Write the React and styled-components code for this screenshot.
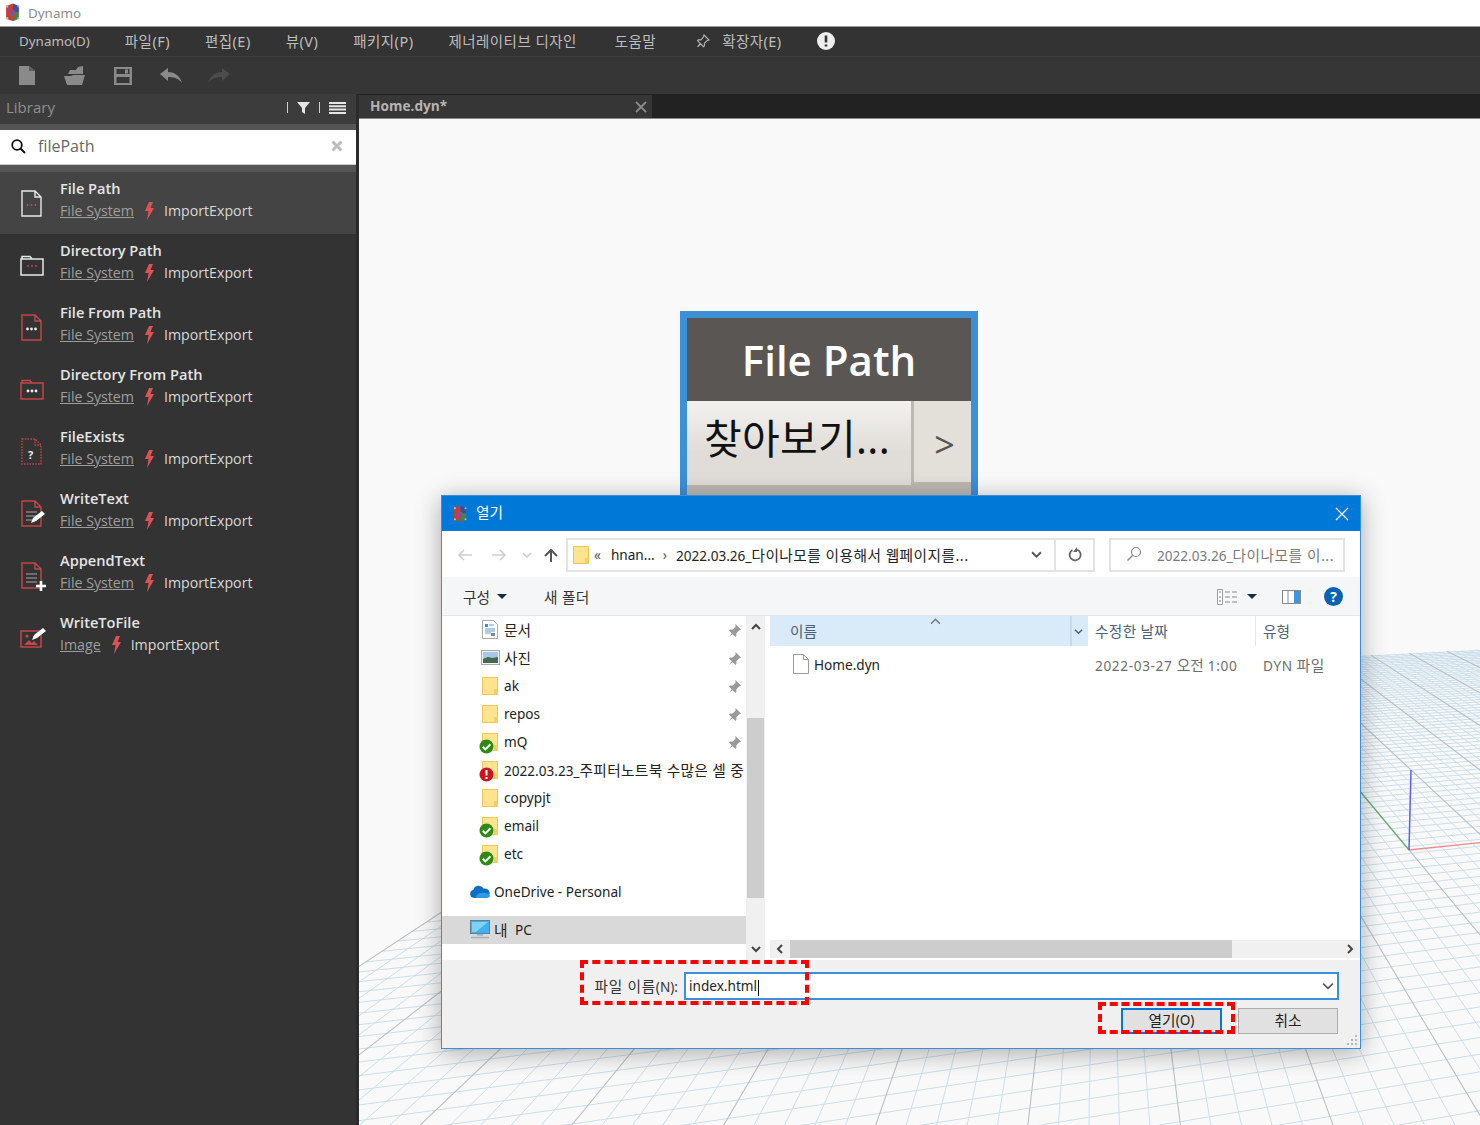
import React from "react";
import styled, { createGlobalStyle } from "styled-components";

const KR = `"Noto Sans", "Noto Sans CJK KR", sans-serif`;
const OPEN = `"Open Sans", "Noto Sans CJK KR", sans-serif`;

const Global = createGlobalStyle`
  html, body { margin: 0; padding: 0; background: #fff; }
  * { box-sizing: border-box; }
`;

const Page = styled.div`
  width: 1480px; height: 1125px; overflow: hidden; display: flex; flex-direction: column;
  font-family: ${KR}; background: #333;
`;
const TitleBar = styled.div`
  height: 27px; background: #fff; border-bottom: 1px solid #9a9a9a; display: flex; align-items: center;
  padding: 0 0 1px 5px; gap: 8px; color: #8c8c8c; font-size: 13.4px; flex: none;
`;
const MenuBar = styled.div`
  height: 30px; background: #333; border-bottom: 1px solid #3d3d3d; display: flex; align-items: center;
  padding: 0 0 2px 19px; gap: 35px; color: #bdbdbd; font-size: 13.4px; flex: none;
`;
const MenuItem = styled.span`
  display: inline-flex; align-items: center; gap: 12px; white-space: nowrap;
  margin-left: ${p => p.$ml || 0}px;
  ${p => p.$ko && "font-size: 14.5px; letter-spacing: .45px;"}
`;
const Toolbar = styled.div`
  height: 37px; background: #363636; display: flex; align-items: center; padding-left: 3px; flex: none;
`;
const ToolButton = styled.div`
  width: 48px; display: flex; justify-content: center; align-items: center;
`;
const Main = styled.div`
  flex: 1; display: flex; min-height: 0;
`;
const Library = styled.aside`
  width: 359px; flex: none; background: #333; border-right: 3px solid #2b2b2b; display: flex; flex-direction: column;
`;
const LibHeader = styled.div`
  height: 30px; background: #3c3c3c; display: flex; align-items: center; padding: 0 10px 3px 6px;
  color: #8f8f8f; font-family: ${OPEN}; font-size: 15px; flex: none;
`;
const LibTitle = styled.span`flex: 1; padding-bottom: 1px;`;
const LibTools = styled.div`
  display: flex; align-items: center; gap: 9px; color: #cfcfcf;
`;
const Sep = styled.i`
  width: 1px; height: 11px; background: #cfcfcf; display: block;
`;
const SearchWrap = styled.div`
  background: #555; padding: 6px 0 7px; flex: none;
`;
const SearchBox = styled.div`
  height: 35px; background: #fff; display: flex; align-items: center; padding: 0 13px 2px 11px; gap: 12px;
  border-bottom: 1px solid #ccc;
`;
const SearchText = styled.span`
  flex: 1; font-family: ${OPEN}; font-size: 16px; color: #666;
`;
const Row = styled.div`
  height: 62px; display: flex; align-items: center; flex: none; background: ${p => (p.$active ? "#444" : "transparent")};
`;
const RowIcon = styled.div`
  width: 60px; flex: none; display: flex; justify-content: center; padding: 3px 0 0 6px;
`;
const RowText = styled.div`
  display: flex; flex-direction: column; padding-bottom: 6px; font-family: ${OPEN};
`;
const RowName = styled.div`
  line-height: 20px; margin-bottom: 2px; font-size: 14.6px; font-weight: 600; color: #e4e4e4;
`;
const RowSub = styled.div`
  line-height: 22px; font-size: 14.2px; color: #d8d8d8; display: flex; align-items: center;
`;
const RowLink = styled.span`
  color: #9e9e9e; text-decoration: underline;
`;
const BoltWrap = styled.span`
  display: inline-flex; margin: 0 10px 0 10px;
`;
const Workspace = styled.div`
  flex: 1; display: flex; flex-direction: column; min-width: 0;
`;
const TabRow = styled.div`
  height: 25px; display: flex; background: #222; border-bottom: 1px solid #8a8a8a; flex: none; padding-top: 1px;
`;
const Tab = styled.div`
  width: 293px; background: #363636; display: flex; align-items: center; justify-content: space-between;
  padding: 0 5px 2px 11px; font-family: ${OPEN}; font-size: 13.7px; font-weight: 700; color: #b5b5b5;
`;
const Canvas = styled.div`
  flex: 1; position: relative; background: #f9f9f9; overflow: hidden;
`;
const GridSvg = styled.svg`
  position: absolute; inset: 0;
`;
const Node = styled.div`
  position: absolute; left: 321px; top: 192px; width: 298px; height: 200px; border: 7px solid #3d8fd8;
  background: #bdb8b2; display: flex; flex-direction: column;
`;
const NodeTitle = styled.div`
  height: 83px; background: #5a5654; color: #fff; display: flex; align-items: center; justify-content: center;
  font-family: ${OPEN}; font-size: 42px; font-weight: 600; flex: none;
`;
const NodeBody = styled.div`
  display: flex; height: 81px; flex: none;
`;
const NodeBrowse = styled.div`
  width: 224px; height: 84px; background: linear-gradient(#f3f1ef, #e0ddd8 60%); color: #111; font-size: 41px;
  display: flex; align-items: center; padding: 0 0 15px 17px; font-family: ${KR}; white-space: nowrap; letter-spacing: .3px;
`;
const NodeArrow = styled.div`
  width: 57px; margin-left: 3px; background: #e3e0da; color: #555; font-size: 36px; display: flex; align-items: center;
  justify-content: center; font-family: ${OPEN}; padding: 6px 0 0 4px;
`;
const Dialog = styled.div`
  position: absolute; left: 82px; top: 376px; width: 920px; height: 554px; border: 1px solid #3a8fdc;
  background: #fff; display: flex; flex-direction: column; box-shadow: 0 4px 24px rgba(0,0,0,.32);
  font-size: 13.6px; color: #222;
`;
const Ko = styled.span`
  font-size: 14.7px; letter-spacing: ${p => p.$ls || 0}px;
`;
const DlgTitle = styled.div`
  height: 35px; background: #0078d7; color: #fff; display: flex; align-items: center; padding: 0 11px; gap: 9px; flex: none;
`;
const DlgTitleText = styled.span`flex: 1; padding-bottom: 4px;`;
const AddressRow = styled.div`
  height: 46px; display: flex; align-items: center; flex: none; padding: 1px 0 0 15px;
`;
const NavArrow = styled.div`
  width: ${p => p.$w}px; display: flex; justify-content: flex-start; flex: none;
`;
const AddressBar = styled.div`
  width: 529px; height: 34px; border: 2px solid #e3e3e3; display: flex; align-items: center; flex: none; margin-left: 6px; padding-left: 5px;
  white-space: nowrap;
`;
const AddrSeg = styled.span`
  margin-left: ${p => p.$ml}px; color: ${p => p.$c || "#222"}; padding-bottom: 1px;
`;
const AddrSpacer = styled.span`flex: 1;`;
const AddrChevron = styled.div`
  width: 36px; display: flex; justify-content: center;
`;
const RefreshBtn = styled.div`
  width: 39px; align-self: stretch; border-left: 2px solid #e3e3e3; display: flex; align-items: center; justify-content: center;
`;
const SearchField = styled.div`
  width: 236px; height: 34px; border: 2px solid #e3e3e3; margin-left: 14px; display: flex; align-items: center; gap: 15px; flex: none;
  padding: 0 0 1px 15px; color: #7a7a7a; white-space: nowrap; overflow: hidden;
`;
const DlgToolbar = styled.div`
  height: 39px; background: #f5f6f7; border-bottom: 1px solid #e6e6e6; display: flex; align-items: center; flex: none; padding: 1px 17px 0 21px;
  color: #333;
`;
const ToolLabel = styled.span`
  display: inline-flex; align-items: center; gap: ${p => p.$gap || 7}px; margin-right: ${p => p.$mr || 0}px;
`;
const Spacer = styled.span`flex: 1;`;
const Caret = styled.i`
  width: 0; height: 0; border-left: 5px solid transparent; border-right: 5px solid transparent; border-top: 5px solid #1a2a44; display: inline-block;
`;
const DlgContent = styled.div`
  height: 344px; display: flex; flex: none;
`;
const NavPane = styled.div`
  width: 304px; flex: none; overflow: hidden; display: flex; flex-direction: column;
`;
const NavRow = styled.div`
  height: 28px; display: flex; align-items: center; gap: 4px; flex: none; white-space: nowrap; position: relative; padding-bottom: 1px;
  padding-left: ${p => (p.$top ? 28 : 38)}px; margin-top: ${p => p.$mt || 0}px; background: ${p => (p.$sel ? "#d9d9d9" : "transparent")};
`;
const NavIconBox = styled.span`
  width: 20px; height: 20px; position: relative; display: inline-flex; align-items: center; justify-content: center; flex: none;
`;
const PinBox = styled.span`
  position: absolute; left: 286px; top: 8px; display: flex;
`;
const VScroll = styled.div`
  width: 19px; flex: none; background: #f0f0f0; position: relative; display: flex; flex-direction: column; align-items: center; justify-content: space-between; padding: 6px 0;
`;
const VThumb = styled.div`
  position: absolute; left: 1px; right: 1px; top: 102px; height: 180px; background: #cdcdcd;
`;
const ListPane = styled.div`
  margin-left: 5px; flex: 1; display: flex; flex-direction: column; position: relative;
`;
const ListHead = styled.div`
  height: 30px; display: flex; flex: none; color: #4c607a;
`;
const HeadName = styled.div`
  width: 318px; background: #d9ebf9; display: flex; align-items: center; padding: 0 0 2px 20px; position: relative;
`;
const SortMark = styled.span`
  position: absolute; left: 160px; top: 0; display: flex;
`;
const HeadSplit = styled.span`
  position: absolute; left: 300px; top: 0; bottom: 0; width: 18px; border-left: 2px solid #c4d9ea; display: flex; align-items: center; justify-content: center; padding-right: 3px;
`;
const HeadCol = styled.div`
  width: ${p => p.$w}px; display: flex; align-items: center; padding: 0 0 2px ${p => p.$pl}px; border-right: ${p => (p.$line ? "1px solid #e5e5e5" : "none")};
`;
const FileRow = styled.div`
  height: 38px; display: flex; align-items: center; color: #222; flex: none; padding-bottom: 2px;
`;
const FileName = styled.div`
  width: 325px; display: flex; align-items: center; gap: 5px; padding-left: 23px;
`;
const FileCell = styled.div`
  width: ${p => p.$w}px; color: #6d6d6d; white-space: nowrap; letter-spacing: ${p => p.$ls || 0}px;
`;
const ListSpacer = styled.div`flex: 1;`;
const HScroll = styled.div`
  height: 18px; margin-bottom: 2px; background: #f0f0f0; display: flex; align-items: center; flex: none;
`;
const HArrow = styled.div`
  width: 20px; display: flex; justify-content: center; flex: none;
`;
const HThumb = styled.div`
  width: 442px; height: 18px; background: #cdcdcd; flex: none;
`;
const DlgBottom = styled.div`
  flex: 1; background: #f0f0f0; position: relative; display: flex; flex-direction: column; padding: 12px 21px 0 0;
`;
const FileLine = styled.div`
  display: flex; align-items: center; justify-content: flex-end; gap: 6px; height: 28px;
`;
const FileLabel = styled.span`
  color: #333; white-space: nowrap; padding-bottom: 2px;
`;
const FileInput = styled.div`
  width: 655px; height: 28px; background: #fff; border: 2px solid #3a8fdc; display: flex; align-items: center; padding: 0 3px; justify-content: space-between;
  color: #222;
`;
const Cursor = styled.i`
  display: inline-block; width: 1px; height: 16px; background: #111; vertical-align: middle; margin-left: 1px;
`;
const BtnLine = styled.div`
  display: flex; justify-content: flex-end; gap: 16px; margin: 8px 1px 0 0;
`;
const DlgBtn = styled.div`
  width: ${p => p.$w}px; height: 26px; background: #e1e1e1; border: ${p => (p.$primary ? "2px solid #0078d7" : "1px solid #adadad")};
  display: flex; align-items: center; justify-content: center; color: #222; padding-bottom: 4px;
`;
const Callout = styled.div`
  position: absolute; left: ${p => p.$l}px; top: ${p => p.$t}px; width: ${p => p.$w}px; height: ${p => p.$h}px;
  border: 4px dashed #f00; pointer-events: none;
`;
const Grip = styled.svg`
  position: absolute; right: 2px; bottom: 2px;
`;

const Logo = ({ w = 15 }) => (
  <svg width={w} height={w * 1.25} viewBox="0 0 15 19">
    <path d="M1 3 8 .5V18.500L1 16z" fill="#c4403a" />
    <path d="M8 .5 14 3v6H8z" fill="#3b4f9e" />
    <path d="M8 9h6v7l-6 2.500z" fill="#4f7f45" />
    <path d="M4.500 6.500 10.500 7.500 9 13.500 4 12.500z" fill="#8a4f8f" />
    <circle cx="2" cy="3.500" r="1.200" fill="#e9a0a0" /><circle cx="13.500" cy="3.500" r="1.100" fill="#9fb4e0" /><circle cx="2" cy="15.500" r="1.200" fill="#e9b0a0" /><circle cx="13.500" cy="15.500" r="1.100" fill="#a0c8a0" />
  </svg>
);

const RED = "#c4474a";
const Dots = ({ x, y, c, r = 1.1 }) => (
  <g fill={c}><circle cx={x} cy={y} r={r} /><circle cx={x + 4} cy={y} r={r} /><circle cx={x + 8} cy={y} r={r} /></g>
);
const FileShape = ({ c, dash }) => (
  <path d="M2 2h13l6 6v19H2zM15 2v6h6" fill="none" stroke={c} strokeWidth="1.4" strokeDasharray={dash ? "1.5 1.3" : undefined} />
);
const FolderShape = ({ c }) => (
  <path d="M1 8h22v16H1zM2 8V5.5h8l2 2.5" fill="none" stroke={c} strokeWidth="1.5" />
);
const Lines = () => (
  <g stroke="#a8a8a8" strokeWidth="1.2"><path d="M6 13h11M6 17h11M6 21h11" /></g>
);
const Pen = ({ x = 0, y = 0 }) => (
  <path transform={`translate(${x} ${y})`} d="M7 16l2-5 9-7 3 3-9 7z" fill="#fff" />
);
const RowGlyph = ({ kind }) => {
  const m = {
    filePath: <><FileShape c="#e8e8e8" /><Dots x={7.5} y={16} c="#d8484a" r={.9} /></>,
    dirPath: <><FolderShape c="#e8e8e8" /><Dots x={8} y={15} c="#d8484a" r={.9} /></>,
    fileFrom: <><FileShape c={RED} /><Dots x={7.5} y={16} c="#eee" r={1.4} /></>,
    dirFrom: <><FolderShape c={RED} /><Dots x={8} y={16} c="#eee" r={1.4} /></>,
    exists: <><FileShape c={RED} dash /><text x="8" y="22" fontSize="11" fontWeight="700" fill="#eee" fontFamily="Open Sans">?</text></>,
    write: <><FileShape c={RED} /><Lines /><Pen x={4} y={8} /></>,
    append: <><FileShape c={RED} /><Lines /><path d="M21 20v10M16 25h10" stroke="#fff" strokeWidth="2.6" /></>,
    image: <><path d="M1 8h20v16H1z" fill="none" stroke={RED} strokeWidth="1.5" /><path d="M4 22l5-5 3 3 2-2 4 4z" fill={RED} /><circle cx="7" cy="13" r="1.6" fill={RED} /><Pen x={5} y={1} /></>,
  };
  return <svg width="27" height="32" viewBox="0 0 27 32" style={{ overflow: "visible" }}>{m[kind]}</svg>;
};
const Bolt = () => (
  <svg width="10" height="18" viewBox="0 0 10 18"><path d="M5 0h4L6.5 6H10L3 18l1.6-9H1z" fill="#de5253" /></svg>
);

const GRAY = "#8a8a8a";
const TbFile = () => <svg width="16" height="19" viewBox="0 0 16 19"><path d="M0 0h10l6 5v14H0z" fill={GRAY} /><path d="M10 0v5h6" fill="#5f5f5f" /></svg>;
const TbOpen = () => <svg width="22" height="19" viewBox="0 0 22 19"><path d="M4 8 6 4h6l2-3 5-1v8z" fill={GRAY} /><path d="M0 10h7l2-1h12l-3 10H3z" fill={GRAY} /></svg>;
const TbSave = () => <svg width="18" height="18" viewBox="0 0 18 18"><path d="M0 0h18v18H0zM2.500 2v5h13V2zM2.500 10v6h13v-6z" fill={GRAY} fillRule="evenodd" /><path d="M11 2.500h3v4h-3z" fill={GRAY} /></svg>;
const TbUndo = ({ c }) => <svg width="22" height="15" viewBox="0 0 22 15"><path d="M8 0v4c7 0 12 4 14 11-3-4-7-6-14-6v4L0 6z" fill={c} /></svg>;
const TbRedo = ({ c }) => <svg width="22" height="15" viewBox="0 0 22 15"><path d="M14 0v4C7 4 2 8 0 15c3-4 7-6 14-6v4l8-7z" fill={c} /></svg>;
const Pin = ({ c = "#8f8f8f", s = 13 }) => (
  <svg width={s} height={s} viewBox="0 0 14 14"><path d="M8 0l6 6-2 1-3 3 0 3-1 1-3-3-4 3 3-4-3-3 1-1h3l3-3z" fill={c} /></svg>
);
const PinOutline = () => (
  <svg width="14" height="14" viewBox="0 0 14 14"><path d="M8 1l5 5-2 .7-2.600 2.600 0 2.700-.9.7-2.700-2.700L1.500 12.800l2.800-3.300L1.600 6.800l.7-.9h2.700L7.300 3z" fill="none" stroke="#b5b5b5" strokeWidth="1.100" /></svg>
);
const Chevron = ({ dir = "down", c = "#555", s = 10, w = 1.6 }) => {
  const d = { down: "M1 3l4 4 4-4", up: "M1 7l4-4 4 4", left: "M7 1L3 5l4 4", right: "M3 1l4 4-4 4" }[dir];
  return <svg width={s} height={s} viewBox="0 0 10 10"><path d={d} fill="none" stroke={c} strokeWidth={w} /></svg>;
};
const Folder = () => (
  <svg width="16" height="18" viewBox="0 0 16 18"><path d="M.5.500h12l3 0v17H.500z" fill="#ffe48f" stroke="#eac559" /><path d="M12 12h3.500v5.500H12z" fill="#f4cf63" /></svg>
);
const Badge = ({ kind }) => (
  <svg width="15" height="15" viewBox="0 0 15 15" style={{ position: "absolute", left: -1, bottom: -2 }}>
    <circle cx="7.500" cy="7.500" r="7" fill={kind === "ok" ? "#2f8a12" : "#c8171d"} />
    {kind === "ok"
      ? <path d="M3.800 7.800l2.600 2.600 5-5.200" fill="none" stroke="#fff" strokeWidth="2" />
      : <path d="M7.500 3v5.500M7.500 10v2" stroke="#fff" strokeWidth="2" />}
  </svg>
);
const DocIcon = () => (
  <svg width="16" height="19" viewBox="0 0 16 19"><path d="M.5.500h11l4 4v14H.500z" fill="#fff" stroke="#a9a9a9" /><path d="M3 4h3v3H3z" fill="#3f8fd8" /><path d="M7 5h5M3 9h10M3 11h10M3 13h6" stroke="#5c9ad2" /><path d="M9 13h4v3H9z" fill="#7a8a9a" /></svg>
);
const PicIcon = () => (
  <svg width="19" height="15" viewBox="0 0 19 15"><rect x=".5" y=".5" width="18" height="14" fill="#f2f2f2" stroke="#a9a9a9" /><rect x="2" y="2" width="15" height="11" fill="#a6c6ea" /><path d="M2 9l5-2 4 1 6-1v6H2z" fill="#44694f" /></svg>
);
const Cloud = () => (
  <svg width="20" height="13" viewBox="0 0 20 13"><path d="M4 13a4 4 0 0 1-.7-7.900A5.500 5.500 0 0 1 13.500 3.600 4.800 4.800 0 0 1 16 13z" fill="#0b6fc4" /><path d="M6 13c0-3 2-5 5-5 2-1 9 0 9 3 0 1-2 2-4 2z" fill="#2b9be8" /></svg>
);
const Monitor = () => (
  <svg width="20" height="19" viewBox="0 0 20 19"><rect x=".5" y=".5" width="19" height="13" fill="#3fb0f2" stroke="#5f7f94" /><path d="M2 2h16L6 12H2z" fill="#7fd2fa" /><path d="M7 14h6v2H7z" fill="#a9bcc9" /><path d="M1 17.500h18" stroke="#9fb0bc" strokeWidth="1.400" /></svg>
);
const DocFile = () => (
  <svg width="16" height="20" viewBox="0 0 16 20"><path d="M.5.500h10l5 5v14H.500zM10.500.500v5h5" fill="#fff" stroke="#9a9a9a" /></svg>
);
const ArrowLine = ({ dir, c }) => (
  <svg width="16" height="14" viewBox="0 0 16 14">
    {dir === "left" && <path d="M15 7H2M7 2 2 7l5 5" fill="none" stroke={c} strokeWidth="1.600" />}
    {dir === "right" && <path d="M1 7h13M9 2l5 5-5 5" fill="none" stroke={c} strokeWidth="1.600" />}
    {dir === "up" && <path d="M8 14V2M2 8l6-6 6 6" fill="none" stroke={c} strokeWidth="2" />}
  </svg>
);

const VA = [5100, 470], VB = [1100, 480], O = [1409, 850];
const a = 0.0219, b = 0.087;
const project = (u, v) => {
  const w = u * a + v * b + 1;
  return [(u * a * VA[0] + v * b * VB[0] + O[0]) / w, (u * a * VA[1] + v * b * VB[1] + O[1]) / w];
};
const Uline = (v, u0, u1) => { const p = project(u0, v), q = project(u1, v); return `M${p[0].toFixed(1)} ${p[1].toFixed(1)}L${q[0].toFixed(1)} ${q[1].toFixed(1)}`; };
const Vline = (u, v0, v1) => { const p = project(u, v0), q = project(u, v1); return `M${p[0].toFixed(1)} ${p[1].toFixed(1)}L${q[0].toFixed(1)} ${q[1].toFixed(1)}`; };

const UMIN = -10, UMAX = 12, VMIN = -7.5, VMAX = 12;
const buildGrid = () => {
  let minor = "", major = "";
  for (let i = 0; i <= (UMAX - UMIN) * 5; i++) {
    const u = UMIN + i / 5;
    const d = Vline(u, VMIN, VMAX);
    if (i % 5 === 0) major += d; else minor += d;
  }
  for (let i = 0; i <= (VMAX - VMIN) * 5; i++) {
    const v = VMIN + i / 5;
    const d = Uline(v, UMIN, UMAX);
    if (Math.abs(v - Math.round(v)) < 0.01) major += d; else minor += d;
  }
  return { minor, major };
};
const Grid = () => {
  const { minor, major } = buildGrid();
  const g = project(0, 3), r = project(10, 0);
  return (
    <GridSvg width="1121" height="1006" viewBox="359 119 1121 1006">
      <path d={minor} stroke="#cbdfeb" strokeWidth="1" fill="none" />
      <path d={major} stroke="#b9c0c4" strokeWidth="1.100" fill="none" />
      <path d={`M${O[0]} ${O[1]}L${g[0]} ${g[1]}`} stroke="#6fae70" strokeWidth="1.300" />
      <path d={`M${O[0]} ${O[1]}L${r[0]} ${r[1]}`} stroke="#f28a8a" strokeWidth="1.300" />
      <path d="M1409 850L1411 770" stroke="#5f5fea" strokeWidth="1.500" />
    </GridSvg>
  );
};

const rows = [
  ["File Path", "File System", "filePath", true],
  ["Directory Path", "File System", "dirPath"],
  ["File From Path", "File System", "fileFrom"],
  ["Directory From Path", "File System", "dirFrom"],
  ["FileExists", "File System", "exists"],
  ["WriteText", "File System", "write"],
  ["AppendText", "File System", "append"],
  ["WriteToFile", "Image", "image"],
];
const nav = [
  [<Ko key="k">문서</Ko>, "doc", true, "a"], [<Ko key="k">사진</Ko>, "pic", true, "b"], ["ak", null, true, "c"], ["repos", null, true, "d"], ["mQ", "ok", true, "e"],
  [<>2022.03.23_<Ko $ls={.32}>주피터노트북 수많은 셀 중</Ko></>, "err", false, "f"], ["copypjt", null, false, "g"], ["email", "ok", false, "h"], ["etc", "ok", false, "i"],
];

export default function App() {
  return (
    <Page>
      <Global />
      <TitleBar><Logo /><span>Dynamo</span></TitleBar>
      <MenuBar>
        <MenuItem>Dynamo(D)</MenuItem>
        <MenuItem $ko>파일(F)</MenuItem>
        <MenuItem $ko>편집(E)</MenuItem>
        <MenuItem $ko>뷰(V)</MenuItem>
        <MenuItem $ko>패키지(P)</MenuItem>
        <MenuItem $ko>제너레이티브 디자인</MenuItem>
        <MenuItem $ko $ml={3}>도움말</MenuItem>
        <MenuItem $ko $ml={5}><PinOutline />확장자(E)</MenuItem>
        <svg width="18" height="18" viewBox="0 0 18 18"><circle cx="9" cy="9" r="9" fill="#eee" /><path d="M9 3.500v7M9 12.500v2" stroke="#333" strokeWidth="2.600" /></svg>
      </MenuBar>
      <Toolbar>
        <ToolButton><TbFile /></ToolButton>
        <ToolButton><TbOpen /></ToolButton>
        <ToolButton><TbSave /></ToolButton>
        <ToolButton><TbUndo c="#8a8a8a" /></ToolButton>
        <ToolButton><TbRedo c="#4c4c4c" /></ToolButton>
      </Toolbar>
      <Main>
        <Library>
          <LibHeader>
            <LibTitle>Library</LibTitle>
            <LibTools>
              <Sep />
              <svg width="13" height="12" viewBox="0 0 13 12"><path d="M0 0h13L8 6v6L5 10V6z" fill="#e6e6e6" /></svg>
              <Sep />
              <svg width="17" height="12" viewBox="0 0 17 12"><path d="M0 1h17M0 4.300h17M0 7.600h17M0 11h17" stroke="#e6e6e6" strokeWidth="2" /></svg>
            </LibTools>
          </LibHeader>
          <SearchWrap>
            <SearchBox>
              <svg width="15" height="15" viewBox="0 0 15 15"><circle cx="6" cy="6" r="4.800" fill="none" stroke="#111" strokeWidth="1.800" /><path d="M9.500 9.500 14 14" stroke="#111" strokeWidth="2" /></svg>
              <SearchText>filePath</SearchText>
              <svg width="12" height="12" viewBox="0 0 12 12"><path d="M1.500 1.500l9 9M10.500 1.500l-9 9" stroke="#bdbdbd" strokeWidth="3" /></svg>
            </SearchBox>
          </SearchWrap>
          {rows.map(([name, link, kind, active]) => (
            <Row key={name} $active={active}>
              <RowIcon><RowGlyph kind={kind} /></RowIcon>
              <RowText>
                <RowName>{name}</RowName>
                <RowSub><RowLink>{link}</RowLink><BoltWrap><Bolt /></BoltWrap>ImportExport</RowSub>
              </RowText>
            </Row>
          ))}
        </Library>
        <Workspace>
          <TabRow>
            <Tab>Home.dyn*
              <svg width="12" height="12" viewBox="0 0 12 12" style={{ marginTop: 2 }}><path d="M1 1l10 10M11 1 1 11" stroke="#8a8a8a" strokeWidth="1.800" /></svg>
            </Tab>
          </TabRow>
          <Canvas>
            <Grid />
            <Node>
              <NodeTitle>File Path</NodeTitle>
              <NodeBody>
                <NodeBrowse>찾아보기...</NodeBrowse>
                <NodeArrow>&gt;</NodeArrow>
              </NodeBody>
            </Node>
            <Dialog>
              <DlgTitle>
                <Logo w={14} />
                <DlgTitleText><Ko>열기</Ko></DlgTitleText>
                <svg width="14" height="14" viewBox="0 0 14 14"><path d="M1 1l12 12M13 1 1 13" stroke="#fff" strokeWidth="1.300" /></svg>
              </DlgTitle>
              <AddressRow>
                <NavArrow $w={34}><ArrowLine dir="left" c="#cfcfcf" /></NavArrow>
                <NavArrow $w={31}><ArrowLine dir="right" c="#cfcfcf" /></NavArrow>
                <NavArrow $w={21}><Chevron c="#cfcfcf" /></NavArrow>
                <NavArrow $w={17}><ArrowLine dir="up" c="#555" /></NavArrow>
                <AddressBar>
                  <Folder />
                  <AddrSeg $ml={5} $c="#555">«</AddrSeg>
                  <AddrSeg $ml={10}>hnan...</AddrSeg>
                  <AddrSeg $ml={8} $c="#555">›</AddrSeg>
                  <AddrSeg $ml={9}>2022.03.26_<Ko $ls={.45}>다이나모를 이용해서 웹페이지를...</Ko></AddrSeg>
                  <AddrSpacer />
                  <AddrChevron><Chevron c="#555" s={11} w={1.800} /></AddrChevron>
                  <RefreshBtn>
                    <svg width="14" height="15" viewBox="0 0 14 15"><path d="M8.500 2.500a5.500 5.500 0 1 1-4 .5" fill="none" stroke="#666" strokeWidth="1.800" /><path d="M9 0v5H5z" fill="#666" /></svg>
                  </RefreshBtn>
                </AddressBar>
                <SearchField>
                  <svg width="16" height="16" viewBox="0 0 16 16"><circle cx="10" cy="6" r="4.500" fill="none" stroke="#8a8a8a" strokeWidth="1.200" /><path d="M6.800 9.200 1.500 14.500" stroke="#8a8a8a" strokeWidth="1.400" /></svg>
                  <span>2022.03.26_<Ko $ls={.5}>다이나모를 이...</Ko></span>
                </SearchField>
              </AddressRow>
              <DlgToolbar>
                <ToolLabel $mr={37}><Ko>구성</Ko> <Caret /></ToolLabel>
                <ToolLabel><Ko $ls={.3}>새 폴더</Ko></ToolLabel>
                <Spacer />
                <ToolLabel $mr={25} $gap={10}>
                  <svg width="20" height="16" viewBox="0 0 20 16"><path d="M.5.500h5v15h-5z" fill="#fff" stroke="#9a9a9a" /><path d="M2 3h2M2 8h2M2 12h2" stroke="#777" /><path d="M8 3h5M15 3h5M8 8h5M15 8h5M8 13h5M15 13h5" stroke="#8a8a8a" /></svg>
                  <Caret />
                </ToolLabel>
                <svg width="19" height="14" viewBox="0 0 19 14" style={{ marginRight: 23 }}><rect x=".5" y=".5" width="18" height="13" fill="#fff" stroke="#8a8a8a" /><path d="M6 1v12" stroke="#8a8a8a" /><path d="M12 1h6v12h-6z" fill="#3e96e0" /></svg>
                <svg width="19" height="19" viewBox="0 0 19 19"><circle cx="9.500" cy="9.500" r="9.500" fill="#0b62b4" /><text x="9.500" y="14.500" textAnchor="middle" fontSize="14" fontWeight="700" fill="#fff" fontFamily="Open Sans">?</text></svg>
              </DlgToolbar>
              <DlgContent>
                <NavPane>
                  {nav.map(([label, kind, pin, id]) => (
                    <NavRow key={id}>
                      <NavIconBox>
                        {kind === "doc" ? <DocIcon /> : kind === "pic" ? <PicIcon /> : (
                          <><Folder />{(kind === "ok" || kind === "err") && <Badge kind={kind} />}</>
                        )}
                      </NavIconBox>
                      <span>{label}</span>
                      {pin && <PinBox><Pin c="#9a9a9a" /></PinBox>}
                    </NavRow>
                  ))}
                  <NavRow $top $mt={10}><NavIconBox><Cloud /></NavIconBox>OneDrive - Personal</NavRow>
                  <NavRow $top $sel $mt={10}><NavIconBox><Monitor /></NavIconBox><Ko>내</Ko>&nbsp;PC</NavRow>
                </NavPane>
                <VScroll>
                  <VThumb />
                  <Chevron dir="up" c="#444" w={2} />
                  <Chevron c="#444" w={2} />
                </VScroll>
                <ListPane>
                  <ListHead>
                    <HeadName><Ko>이름</Ko>
                      <SortMark><Chevron dir="up" c="#777" s={11} w={1.300} /></SortMark>
                      <HeadSplit><Chevron c="#4c607a" s={9} /></HeadSplit>
                    </HeadName>
                    <HeadCol $w={168} $pl={7} $line><Ko $ls={.3}>수정한 날짜</Ko></HeadCol>
                    <HeadCol $w={100} $pl={7}><Ko>유형</Ko></HeadCol>
                  </ListHead>
                  <FileRow>
                    <FileName><DocFile />Home.dyn</FileName>
                    <FileCell $w={168} $ls={.65}>2022-03-27 <Ko>오전</Ko> 1:00</FileCell>
                    <FileCell $w={90} $ls={.6}>DYN <Ko $ls={.6}>파일</Ko></FileCell>
                  </FileRow>
                  <ListSpacer />
                  <HScroll>
                    <HArrow><Chevron dir="left" c="#444" w={2} /></HArrow>
                    <HThumb />
                    <Spacer />
                    <HArrow><Chevron dir="right" c="#444" w={2} /></HArrow>
                  </HScroll>
                </ListPane>
              </DlgContent>
              <DlgBottom>
                <FileLine>
                  <FileLabel><Ko $ls={.7}>파일 이름</Ko>(N):</FileLabel>
                  <FileInput>
                    <span>index.html<Cursor /></span>
                    <Chevron c="#555" s={12} w={1.300} />
                  </FileInput>
                </FileLine>
                <BtnLine>
                  <DlgBtn $w={101} $primary><Ko>열기</Ko>(O)</DlgBtn>
                  <DlgBtn $w={100}><Ko>취소</Ko></DlgBtn>
                </BtnLine>
                <Callout $l={138} $t={0} $w={229} $h={45} />
                <Callout $l={656} $t={42} $w={137} $h={32} />
                <Grip width="12" height="12" viewBox="0 0 12 12"><path d="M9 1h2v2H9zM5 5h2v2H5zM9 5h2v2H9zM1 9h2v2H1zM5 9h2v2H5zM9 9h2v2H9z" fill="#b5b5b5" /></Grip>
              </DlgBottom>
            </Dialog>
          </Canvas>
        </Workspace>
      </Main>
    </Page>
  );
}
